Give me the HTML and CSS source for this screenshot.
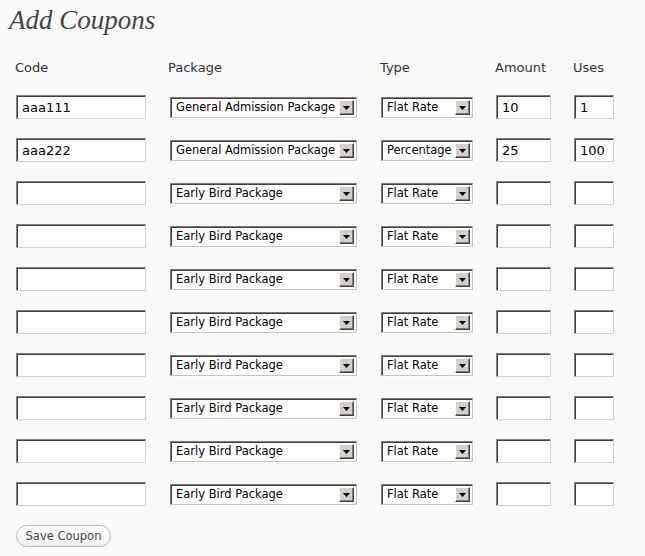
FILE: index.html
```html
<!DOCTYPE html>
<html lang="en">
<head>
    <meta charset="UTF-8">
    <title>Add Coupons</title>
    <link rel="stylesheet" href="styles.css">
</head>
<body>
    <div class="wrap">
        <h2 class="page-title">Add Coupons</h2>

        <form class="coupon-form">
            <div class="coupon-grid" id="couponGrid">
                <div class="col-head">Code</div>
                <div class="col-head">Package</div>
                <div class="col-head">Type</div>
                <div class="col-head">Amount</div>
                <div class="col-head">Uses</div>
            </div>

            <button type="button" class="button">Save Coupon</button>
        </form>
    </div>

    <script>
        // coupon rows, first two already filled in
        const rows = [
            { code: 'aaa111', pkg: 'General Admission Package', type: 'Flat Rate', amount: '10', uses: '1' },
            { code: 'aaa222', pkg: 'General Admission Package', type: 'Percentage', amount: '25', uses: '100' }
        ];
        while (rows.length < 10) {
            rows.push({ code: '', pkg: 'Early Bird Package', type: 'Flat Rate', amount: '', uses: '' });
        }

        const arrow = '<span class="sel-btn"><svg width="7" height="4" viewBox="0 0 7 4"><path d="M0 0h7L3.5 4z" fill="#000"/></svg></span>';

        function selectBox(cls, options, value) {
            const opts = options.map(o => `<option${o === value ? ' selected' : ''}>${o}</option>`).join('');
            return `<div class="sel ${cls}"><select>${opts}</select>${arrow}</div>`;
        }

        const grid = document.getElementById('couponGrid');
        rows.forEach((r) => {
            grid.insertAdjacentHTML('beforeend', `
                <div class="cell"><input type="text" class="txt code" value="${r.code}"></div>
                <div class="cell">${selectBox('pkg', ['General Admission Package', 'Early Bird Package'], r.pkg)}</div>
                <div class="cell">${selectBox('type', ['Flat Rate', 'Percentage'], r.type)}</div>
                <div class="cell"><input type="text" class="txt amount" value="${r.amount}"></div>
                <div class="cell"><input type="text" class="txt uses" value="${r.uses}"></div>
            `);
        });
    </script>
</body>
</html>
```

FILE: styles.css
```css
* {
    margin: 0;
    padding: 0;
    box-sizing: border-box;
}

body {
    background: #f9f9f9;
    color: #333;
    font-family: "DejaVu Sans", Verdana, sans-serif;
}

.page-title {
    font-family: "Liberation Serif", Georgia, serif;
    font-style: italic;
    font-weight: normal;
    font-size: 27px;
    line-height: 30px;
    color: #464646;
    padding: 5px 0 0 9px;
}

.coupon-form {
    padding: 25px 0 0 16px;
}

/* 表格布局 */
.coupon-grid {
    display: grid;
    grid-template-columns: 153px 212px 115px 78px auto;
    row-gap: 19px;
    align-items: start;
}

.col-head {
    font-size: 13px;
    line-height: 16px;
    color: #333;
    margin-left: -1px;
}

.cell {
    display: flex;
    align-items: flex-start;
    height: 24px;
}

/* 文本框 */
.txt {
    height: 24px;
    background: #fff;
    border: 1px solid;
    border-color: #808080 #d4d0c8 #d4d0c8 #808080;
    box-shadow: inset 1px 1px 0 #404040;
    font-family: "DejaVu Sans", Verdana, sans-serif;
    font-size: 13px;
    color: #000;
    padding: 1px 0 0 5px;
    outline: none;
}

.txt.code { width: 130px; }
.txt.amount { width: 55px; }
.txt.uses { width: 40px; }

/* 下拉框 */
.sel {
    position: relative;
    margin-top: 2px;
    height: 21px;
    background: #fff;
    border: 1px solid;
    border-color: #7a7a7a #c8c4bc #c8c4bc #7a7a7a;
    box-shadow: inset 1px 1px 0 #404040, 1px 1px 0 #fff;
}

.sel.pkg { width: 187px; margin-left: 1px; }
.sel.type { width: 92px; }

.sel select {
    display: block;
    appearance: none;
    -webkit-appearance: none;
    width: 100%;
    height: 19px;
    line-height: 19px;
    border: none;
    background: transparent;
    font-family: "DejaVu Sans", Verdana, sans-serif;
    font-size: 11.5px;
    color: #000;
    padding: 0 0 1px 5px;
    outline: none;
}

.sel-btn {
    position: absolute;
    top: 2px;
    right: 2px;
    width: 15px;
    height: 15px;
    background: #d4d0c8;
    border: 1px solid;
    border-color: #fff #404040 #404040 #fff;
    box-shadow: inset -1px -1px 0 #808080;
    display: flex;
    align-items: center;
    justify-content: center;
    pointer-events: none;
}

/* 保存按钮 */
.button {
    margin-top: 19px;
    width: 95px;
    height: 22px;
    border: 1px solid #bbb;
    border-radius: 11px;
    background: linear-gradient(#fff, #f0f0f0);
    font-family: "DejaVu Sans", Verdana, sans-serif;
    font-size: 11.5px;
    color: #464646;
    cursor: pointer;
}
```
